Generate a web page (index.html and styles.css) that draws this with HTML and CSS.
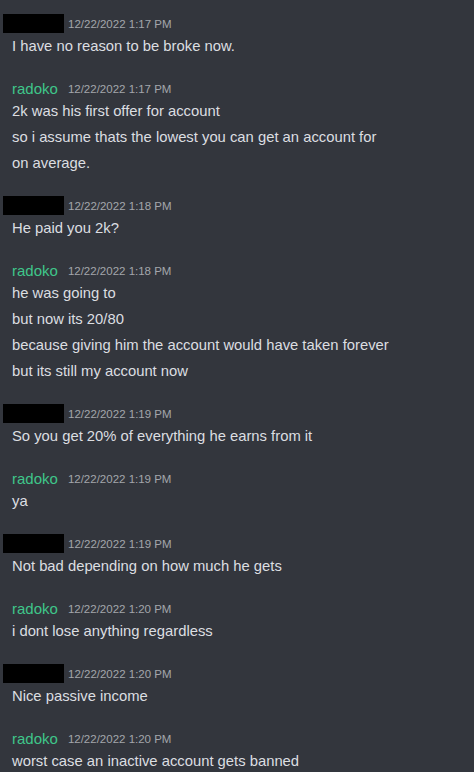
FILE: index.html
```html
<!DOCTYPE html>
<html lang="en">
<head>
    <meta charset="UTF-8">
    <meta name="viewport" content="width=device-width, initial-scale=1.0">
    <title>Chat</title>
    <link rel="stylesheet" href="styles.css">
</head>
<body>
    <div class="chat">
        <div class="message">
            <div class="header"><span class="hidden-name"></span><span class="time">12/22/2022 1:17 PM</span></div>
            <p>I have no reason to be broke now.</p>
        </div>

        <div class="message">
            <div class="header"><span class="name">radoko</span><span class="time">12/22/2022 1:17 PM</span></div>
            <p>2k was his first offer for account</p>
            <p>so i assume thats the lowest you can get an account for</p>
            <p>on average.</p>
        </div>

        <div class="message">
            <div class="header"><span class="hidden-name"></span><span class="time">12/22/2022 1:18 PM</span></div>
            <p>He paid you 2k?</p>
        </div>

        <div class="message">
            <div class="header"><span class="name">radoko</span><span class="time">12/22/2022 1:18 PM</span></div>
            <p>he was going to</p>
            <p>but now its 20/80</p>
            <p>because giving him the account would have taken forever</p>
            <p>but its still my account now</p>
        </div>

        <div class="message">
            <div class="header"><span class="hidden-name"></span><span class="time">12/22/2022 1:19 PM</span></div>
            <p>So you get 20% of everything he earns from it</p>
        </div>

        <div class="message">
            <div class="header"><span class="name">radoko</span><span class="time">12/22/2022 1:19 PM</span></div>
            <p>ya</p>
        </div>

        <div class="message">
            <div class="header"><span class="hidden-name"></span><span class="time">12/22/2022 1:19 PM</span></div>
            <p>Not bad depending on how much he gets</p>
        </div>

        <div class="message">
            <div class="header"><span class="name">radoko</span><span class="time">12/22/2022 1:20 PM</span></div>
            <p>i dont lose anything regardless</p>
        </div>

        <div class="message">
            <div class="header"><span class="hidden-name"></span><span class="time">12/22/2022 1:20 PM</span></div>
            <p>Nice passive income</p>
        </div>

        <div class="message">
            <div class="header"><span class="name">radoko</span><span class="time">12/22/2022 1:20 PM</span></div>
            <p>worst case an inactive account gets banned</p>
        </div>
    </div>
</body>
</html>
```

FILE: styles.css
```css
body {
    margin: 0;
    background-color: #33363d;
    font-family: "Liberation Sans", Arial, sans-serif;
    color: #dcdee1;
    overflow: hidden;
}
.chat {
    padding: 14px 0 0 12px;
}
.message {
    margin-bottom: 20px;
}
.header {
    display: flex;
    align-items: center;
    height: 19px;
}
.name {
    color: #3fc68a;
    font-size: 15px;
    margin-right: 10px;
}
.hidden-name {
    display: inline-block;
    width: 61px;
    height: 19px;
    margin-left: -9px;
    margin-right: 4px;
    background-color: #000;
}
.time {
    color: #a3a6ab;
    font-size: 11.5px;
}
.message p {
    margin: 0;
    font-size: 14.8px;
    line-height: 26px;
}
```
